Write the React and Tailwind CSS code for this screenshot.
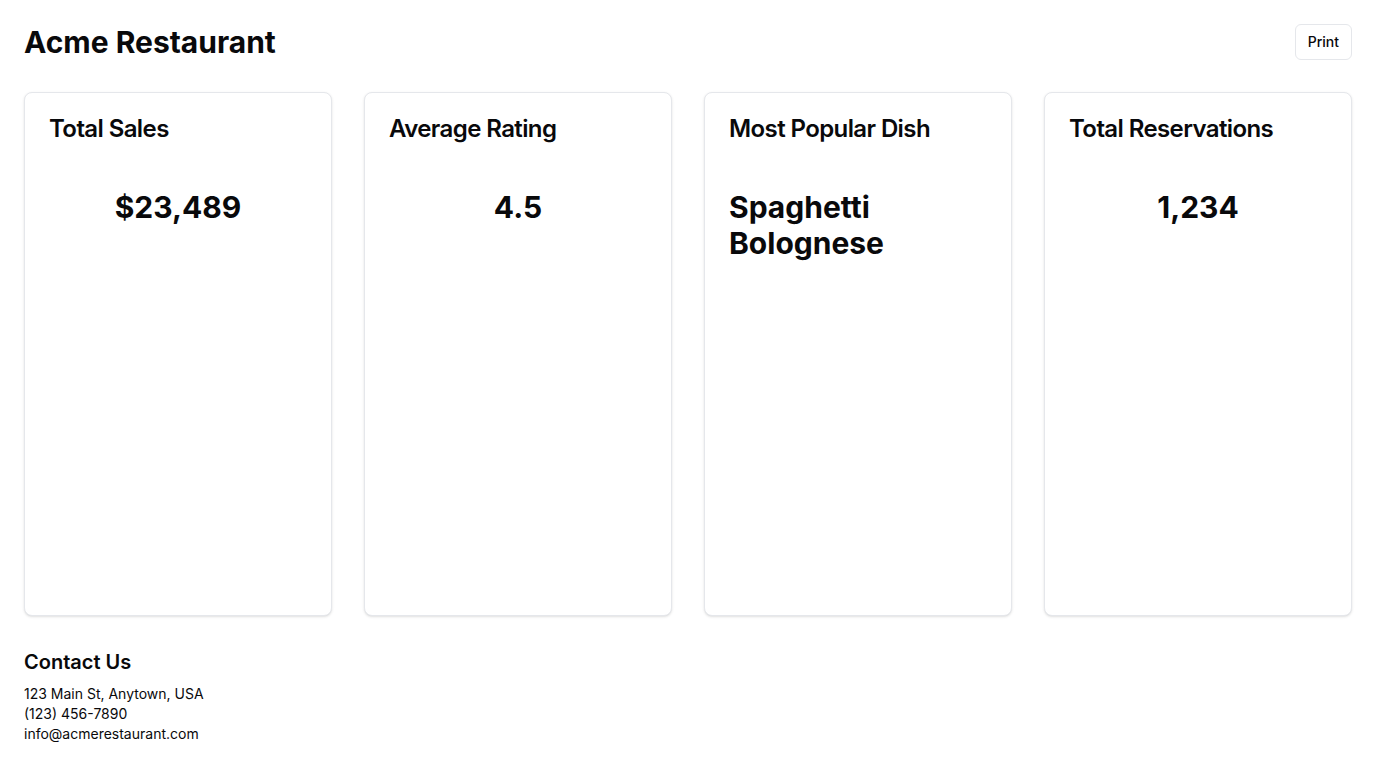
const stats = [
  { title: "Total Sales", value: "$23,489", center: true },
  { title: "Average Rating", value: "4.5", center: true },
  { title: "Most Popular Dish", value: "Spaghetti Bolognese", center: false },
  { title: "Total Reservations", value: "1,234", center: true },
];

function StatCard({ title, value, center }) {
  return (
    <div className="rounded-lg border border-gray-200 bg-white shadow-sm flex flex-col">
      <div className="p-6">
        <h3 className="text-2xl font-semibold leading-none tracking-tight">{title}</h3>
      </div>
      <div className="p-6">
        <div className={`text-3xl font-bold leading-9 ${center ? "text-center" : "text-left"}`}>{value}</div>
      </div>
    </div>
  );
}

export default function App() {
  return (
    <div
      className="h-screen flex flex-col p-6 bg-white text-[#09090b]"
      style={{ fontFamily: "Inter, 'Noto Sans', sans-serif" }}
    >
      <header className="flex items-center justify-between">
        <h1 className="text-3xl font-bold leading-9">Acme Restaurant</h1>
        <button className="h-9 px-3 rounded-md border border-gray-200 bg-white text-sm font-medium">
          Print
        </button>
      </header>

      <main className="flex-1 grid grid-cols-4 gap-8 mt-8">
        {stats.map((s) => (
          <StatCard key={s.title} {...s} />
        ))}
      </main>

      <footer className="mt-8">
        <h2 className="text-xl font-semibold leading-7 mb-2">Contact Us</h2>
        <p className="text-sm leading-5">123 Main St, Anytown, USA</p>
        <p className="text-sm leading-5">(123) 456-7890</p>
        <p className="text-sm leading-5">info@acmerestaurant.com</p>
      </footer>
    </div>
  );
}
